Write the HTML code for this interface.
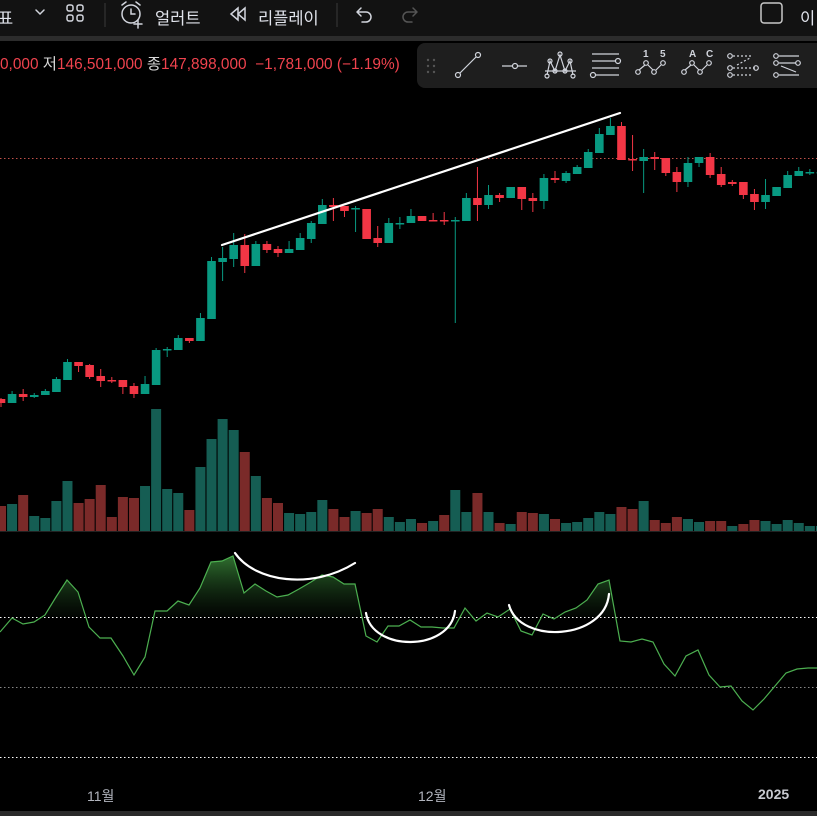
<!DOCTYPE html>
<html><head><meta charset="utf-8">
<style>
html,body{margin:0;padding:0;background:#000;width:817px;height:816px;overflow:hidden;font-family:"Liberation Sans","Noto Sans CJK KR",sans-serif;}
#top{position:absolute;left:0;top:0;width:817px;height:36px;background:#121212;}
#sep{position:absolute;left:0;top:36px;width:817px;height:5px;background:#2c2c2c;}
.t{position:absolute;color:#e0e3eb;font-size:16.5px;top:5px;white-space:nowrap;}
#legend{position:absolute;left:0;top:52px;font-size:15.4px;color:#f0434e;white-space:nowrap;}
#legend b{font-weight:normal;color:#d8d8d8;}
#tb{position:absolute;left:417px;top:43px;width:420px;height:45px;background:#1e1e1e;border-radius:8px;}
svg{position:absolute;left:0;top:0;}
.ax{position:absolute;top:786px;color:#b2b5be;font-size:14px;}
#bot{position:absolute;left:0;top:811px;width:817px;height:5px;background:#2a2a2a;}
</style></head><body>
<div id="top"></div><div id="sep"></div>
<div class="t" style="left:-2px">표</div>
<div class="t" style="left:155px">얼러트</div>
<div class="t" style="left:258px">리플레이</div>
<div class="t" style="left:800px;color:#e0e3eb">이</div>
<div id="legend">0,000 <b>저</b>146,501,000 <b>종</b>147,898,000 &nbsp;−1,781,000 (−1.19%)</div>
<div id="tb"></div>
<div class="ax" style="left:87px">11월</div>
<div class="ax" style="left:418px">12월</div>
<div class="ax" style="left:758px;font-weight:bold;color:#c8cad0">2025</div>
<div id="bot"></div>
<svg id="s" width="817" height="816" xmlns="http://www.w3.org/2000/svg">
<defs>
<linearGradient id="g" x1="0" y1="550" x2="0" y2="617" gradientUnits="userSpaceOnUse">
<stop offset="0" stop-color="#3d8f3d" stop-opacity="0.9"/><stop offset="1" stop-color="#1a3d1a" stop-opacity="0.1"/></linearGradient>
<clipPath id="cp"><rect x="0" y="0" width="817" height="617"/></clipPath>
</defs>
<g fill="none" stroke="#d1d4dc" stroke-width="1.5" stroke-linecap="round">
<path d="M36 10 L40 14 L44 10"/>
<rect x="67" y="5" width="6" height="6" rx="2"/><rect x="77" y="5" width="6" height="6" rx="2"/>
<rect x="67" y="15" width="6" height="6" rx="2"/><rect x="77" y="15" width="6" height="6" rx="2"/>
<circle cx="131" cy="14" r="9"/><path d="M131 9 V14 H135 M122 5 L126 2 M140 5 L136 2 M138 20 V28 M134 24 H142"/>
<path d="M238 8 L231 14 L238 20 Z M245 8 L238 14 L245 20 Z"/>
<path d="M357 12 H366 A5 5 0 0 1 366 22 H362 M357 12 L361 8 M357 12 L361 16"/>
</g>
<g fill="none" stroke="#555" stroke-width="1.5" stroke-linecap="round"><path d="M417 12 H408 A5 5 0 0 0 408 22 H412 M417 12 L413 8 M417 12 L413 16"/></g>
<line x1="105" y1="3" x2="105" y2="27" stroke="#3a3a3a"/><line x1="337" y1="3" x2="337" y2="27" stroke="#3a3a3a"/>
<rect x="761" y="3" width="21" height="20" rx="3" fill="none" stroke="#c8c8c8" stroke-width="1.5"/>
<g fill="#555"><circle cx="428" cy="60" r="1.2"/><circle cx="434" cy="60" r="1.2"/><circle cx="428" cy="66" r="1.2"/><circle cx="434" cy="66" r="1.2"/><circle cx="428" cy="72" r="1.2"/><circle cx="434" cy="72" r="1.2"/></g>
<g fill="none" stroke="#d1d4dc" stroke-width="1.2">
<circle cx="458" cy="75" r="2.5"/><circle cx="478" cy="55" r="2.5"/><path d="M460 73 L476 57"/>
<path d="M502 66 H512 M518 66 H527"/><circle cx="515" cy="66" r="2.5"/>
<path d="M545 71 H576 M547 75 L550 61 L555 71 L560 55 L565 71 L570 61 L573 75"/><circle cx="547" cy="76" r="2"/><circle cx="550" cy="61" r="2"/><circle cx="555" cy="71" r="2"/><circle cx="560" cy="54" r="2"/><circle cx="565" cy="71" r="2"/><circle cx="570" cy="61" r="2"/><circle cx="573" cy="76" r="2"/>
<path d="M592 54 H619 M592 61 H615 M592 68 H619 M595 75 H619"/><circle cx="618" cy="61" r="2.5"/><circle cx="593" cy="75" r="2.5"/>
<circle cx="638" cy="72" r="2.3"/><circle cx="646" cy="63" r="2.3"/><circle cx="654" cy="72" r="2.3"/><circle cx="663" cy="63" r="2.3"/><path d="M639 70 L645 65 M648 65 L653 70 M656 70 L661 65"/>
<circle cx="684" cy="72" r="2.3"/><circle cx="692" cy="63" r="2.3"/><circle cx="700" cy="72" r="2.3"/><circle cx="709" cy="63" r="2.3"/><path d="M685 70 L691 65 M694 65 L699 70 M702 70 L707 65"/>
<circle cx="730" cy="56" r="2.3"/><path d="M733 56 H753 M733 68 H755 M733 75 H753 M737 65 L750 58" stroke-dasharray="2 2"/><circle cx="730" cy="68" r="2.3"/><circle cx="756" cy="68" r="2.3"/><circle cx="730" cy="75" r="2.3"/>
<circle cx="776" cy="56" r="2.3"/><circle cx="776" cy="63" r="2.3"/><circle cx="798" cy="63" r="2.3"/><circle cx="776" cy="75" r="2.3"/><path d="M779 56 H799 M779 63 H796 M779 75 H799 M781 66 L796 72" />
</g>
<g fill="#d1d4dc" font-size="10" font-family="Liberation Sans,sans-serif" font-weight="bold"><text x="643" y="57">1</text><text x="660" y="57">5</text><text x="689" y="57">A</text><text x="706" y="57">C</text></g>
<line x1="0" y1="158.5" x2="817" y2="158.5" stroke="#c0504a" stroke-dasharray="1.5 2.5" stroke-width="1"/>
<line x1="0" y1="531.5" x2="817" y2="531.5" stroke="#222" stroke-width="1"/>
<g stroke="#fff" stroke-dasharray="1.5 2.5" stroke-width="1"><line x1="0" y1="617.5" x2="817" y2="617.5"/><line x1="0" y1="687.5" x2="817" y2="687.5" stroke="#888"/><line x1="0" y1="757.5" x2="817" y2="757.5"/></g>
<g id="vol"></g><g id="cand"></g>
<path id="fill" fill="url(#g)" clip-path="url(#cp)"/>
<polyline id="ind" fill="none" stroke="#4caf50" stroke-width="1.2"/>
<g fill="none" stroke="#fff" stroke-width="2.2" stroke-linecap="round">
<path d="M222 245 L620 113"/>
<path d="M235 553 C255 582 312 590 355 563"/>
<path d="M366 613 C372 652 450 652 455 611"/>
<path d="M509 605 C520 645 605 640 609 594"/>
</g>
</svg>
<script>
var G="#089981",R="#f23645";
var C=[[399,403,398,407],[403,394,391,403],[394,397,389,401],[397,395,393,398],[395,391,389,395],[392,379,377,392],[380,362,359,380],[362,366,362,372],[365,377,364,379],[376,381,369,387],[380,381,377,383],[380,387,380,394],[386,394,383,398],[394,384,376,394],[385,350,348,385],[350,349,347,357],[350,338,335,350],[338,341,338,343],[341,318,313,341],[319,261,257,319],[262,258,247,281],[259,245,233,267],[245,266,234,273],[266,244,241,266],[244,250,241,253],[249,253,246,257],[253,249,241,253],[250,238,233,250],[239,223,221,243],[224,205,199,224],[205,207,198,221],[206,211,206,217],[209,208,206,232],[209,239,209,239],[238,243,226,247],[243,223,218,243],[224,223,217,229],[223,216,209,223],[216,221,216,221],[220,221,213,221],[220,221,212,225],[221,220,217,323],[221,198,193,221],[198,205,167,221],[205,195,185,209],[195,198,193,202],[198,187,187,198],[187,199,187,210],[198,201,193,212],[201,178,174,209],[178,180,171,183],[181,173,171,183],[174,167,165,174],[168,152,149,168],[153,134,128,153],[135,126,118,135],[126,160,122,160],[159,160,135,171],[161,157,149,193],[157,159,152,170],[158,173,158,176],[172,182,167,192],[182,163,157,187],[163,157,157,167],[157,175,153,178],[174,185,167,187],[182,184,180,186],[182,195,182,199],[194,202,189,210],[202,195,179,209],[196,187,187,196],[188,175,171,188],[176,171,167,176],[172,172,169,175],[172,172,169,175]];
var V=[[506,R],[504,G],[495,R],[516,G],[518,G],[501,G],[481,G],[503,R],[499,R],[485,R],[517,R],[497,R],[498,R],[486,G],[409,G],[489,G],[493,G],[510,R],[467,G],[439,G],[419,G],[430,G],[452,R],[476,G],[498,R],[503,R],[513,G],[514,G],[512,G],[500,G],[509,R],[517,R],[511,G],[513,R],[509,R],[517,G],[522,G],[519,G],[523,R],[521,G],[515,R],[490,G],[512,G],[493,R],[512,G],[523,R],[524,G],[512,R],[513,R],[514,G],[519,R],[523,G],[522,G],[518,G],[512,G],[514,G],[507,R],[509,R],[501,G],[520,R],[523,R],[517,R],[519,G],[522,G],[521,R],[521,R],[526,G],[524,R],[520,R],[521,G],[524,G],[520,G],[523,G],[526,G],[526,G]];
var ns="http://www.w3.org/2000/svg",cg=document.getElementById("cand"),vg=document.getElementById("vol");
function el(t,a,p){var e=document.createElementNS(ns,t);for(var k in a)e.setAttribute(k,a[k]);p.appendChild(e);}
C.forEach(function(c,i){var x=1+11.08*i,col=G;if(c[1]>c[0])col=R;
var top=Math.min(c[0],c[1]),h=Math.max(1.5,Math.abs(c[0]-c[1]));
el("line",{x1:x,x2:x,y1:c[2],y2:c[3],stroke:col,"stroke-width":1},cg);
el("rect",{x:x-4.3,y:top,width:8.6,height:h,fill:col},cg);});
V.forEach(function(v,i){var x=1+11.08*i;el("rect",{x:x-5,y:v[0],width:10,height:531-v[0],fill:v[1]==G?"#155d53":"#7a2a29"},vg);});
var P=[[0,632],[12,618],[23,624],[34,622],[45,615],[56,597],[67,580],[78,592],[89,627],[100,638],[111,638],[123,656],[134,675],[145,657],[155,611],[167,611],[178,601],[189,605],[200,588],[211,562],[222,561],[233,556],[244,593],[255,584],[266,591],[277,597],[288,595],[299,589],[311,582],[322,575],[333,577],[344,584],[355,584],[366,636],[377,642],[388,626],[399,626],[410,620],[421,627],[432,627],[443,628],[454,628],[465,608],[476,621],[487,613],[498,617],[510,609],[521,631],[532,635],[543,614],[554,619],[565,612],[576,608],[587,600],[598,584],[609,580],[620,641],[631,642],[642,639],[653,642],[664,664],[675,676],[686,656],[698,650],[709,675],[720,687],[731,686],[742,701],[753,710],[764,699],[775,686],[786,673],[797,669],[808,668],[817,668]];
var s=P.map(function(p){return p[0]+","+p[1]}).join(" ");
document.getElementById("ind").setAttribute("points",s);
document.getElementById("fill").setAttribute("d","M0,617 L"+s.split(" ").join(" L")+" L817,617 Z");
</script>
</body></html>
